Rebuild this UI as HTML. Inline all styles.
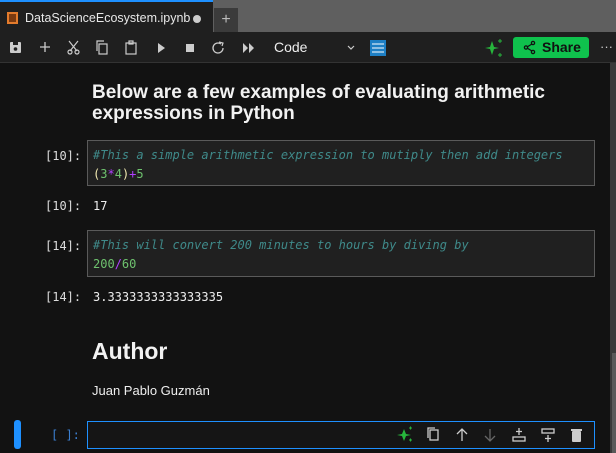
<!DOCTYPE html>
<html><head><style>
*{margin:0;padding:0;box-sizing:border-box}
body{width:616px;height:453px;overflow:hidden;background:#121212;font-family:"Liberation Sans",sans-serif;color:#ddd;position:relative}
.a{position:absolute}
.mono{font-family:"DejaVu Sans Mono","Liberation Mono",monospace;font-size:12px}
.box{position:absolute;left:87px;width:508px;background:#202020;border:1px solid #5a5a5a}
.pr{position:absolute;left:45px;font-family:"DejaVu Sans Mono",monospace;font-size:12px;color:#ddd}
.c{color:#3f8a8a;font-style:italic}
.g{color:#6ec26e}
.p{color:#b040ff}
</style></head><body>
<div class="a" style="left:0;top:0;width:616px;height:32px;background:#5f5f5f"></div>
<div class="a" style="left:0;top:0;width:213px;height:32px;background:#1f1f1f;border-top:2px solid #1e90ff"></div>
<div class="a" style="left:7px;top:12px;width:11px;height:12px;border:2px solid #e37b2c;background:#7a3a10"></div>
<div class="a" style="left:25px;top:11px;font-size:12.5px;color:#e8e8e8">DataScienceEcosystem.ipynb</div>
<div class="a" style="left:193px;top:15px;width:8px;height:8px;border-radius:50%;background:#ccc"></div>
<div class="a" style="left:214px;top:8px;width:24px;height:24px;background:#3b3b3b;color:#bbb;text-align:center;font-size:16px;line-height:23px">+</div>
<div class="a" style="left:0;top:32px;width:616px;height:31px;background:#1f1f1f;border-bottom:1px solid #333"></div>
<svg class="a" style="left:0;top:32px" width="616" height="31">
<g fill="#ccc" stroke="#ccc">
<rect x="10" y="10" width="11" height="11" rx="1" stroke="none"/><rect x="13" y="10" width="5" height="3" fill="#1f1f1f" stroke="none"/><circle cx="15.5" cy="17" r="1.8" fill="#1f1f1f" stroke="none"/>
<path d="M45 10v10M40 15h10" stroke-width="1.3" fill="none"/>
<g fill="none" stroke-width="1.2"><circle cx="70" cy="20" r="2"/><circle cx="77" cy="20" r="2"/><path d="M69 9l8 10M78 9l-8 10"/></g>
<g fill="none" stroke-width="1.2"><rect x="99" y="12" width="8" height="10"/><path d="M97 19V9h7"/></g>
<g fill="none" stroke-width="1.2"><rect x="126" y="11" width="10" height="11"/><rect x="129" y="9" width="4" height="3"/></g>
<path d="M158 11l7 5-7 5z" stroke="none"/>
<rect x="186" y="12" width="8" height="8" stroke="none"/>
<path d="M221 12a5 5 0 1 0 2 4" fill="none" stroke-width="1.3"/><path d="M219 10l4 1-1 3" fill="none" stroke-width="1.2"/>
<path d="M243 11l5 5-5 5zM249 11l5 5-5 5z" stroke="none"/>
<path d="M348 14l3 3 3-3" fill="none" stroke-width="1.2"/>
</g>
<rect x="370" y="8" width="16" height="16" fill="#1e7fc4"/>
<path d="M372 12h12M372 16h12M372 20h12" stroke="#fff" stroke-width="1"/>
<path d="M492 9l2 6 5 1-5 1-2 6-2-6-5-1 5-1z" fill="#27b53c"/><path d="M498 9h4M500 7v4M498 23h4M500 21v4" stroke="#27b53c"/>
<rect x="513" y="5" width="76" height="21" rx="3" fill="#0fc24d"/>
<g fill="none" stroke="#111" stroke-width="1.3"><circle cx="526" cy="15.5" r="1.6"/><circle cx="533" cy="11" r="1.6"/><circle cx="533" cy="20" r="1.6"/><path d="M527 15l5-3M527 16l5 3"/></g>
<text x="542" y="20" font-family="Liberation Sans" font-weight="bold" font-size="14" fill="#111">Share</text>
<text x="600" y="19" font-size="13" fill="#ccc">···</text>
</svg>
<div class="a" style="left:274px;top:39px;font-size:14px;color:#eee">Code</div>
<div class="a" style="left:610px;top:63px;width:6px;height:390px;background:#3a3a3a"></div>
<div class="a" style="left:612px;top:353px;width:4px;height:100px;background:#5a5a5a"></div>
<div class="a" style="left:92px;top:82px;font-size:19px;font-weight:bold;color:#f2f2f2;line-height:21px">Below are a few examples of evaluating arithmetic<br>expressions in Python</div>
<div class="pr" style="top:149px">[10]:</div>
<div class="box mono" style="top:140px;height:46px;padding:5px 5px;line-height:19px"><span class="c">#This a simple arithmetic expression to mutiply then add integers</span><br><span style="color:#f0e8b0">(</span><span class="g">3</span><span class="p">*</span><span class="g">4</span><span style="color:#f0e8b0">)</span><span class="p">+</span><span class="g">5</span></div>
<div class="pr" style="top:199px">[10]:</div>
<div class="a mono" style="left:93px;top:199px;color:#eee">17</div>
<div class="pr" style="top:239px">[14]:</div>
<div class="box mono" style="top:230px;height:47px;padding:5px 5px;line-height:19px"><span class="c">#This will convert 200 minutes to hours by diving by</span><br><span class="g">200</span><span class="p">/</span><span class="g">60</span></div>
<div class="pr" style="top:290px">[14]:</div>
<div class="a mono" style="left:93px;top:290px;color:#eee">3.3333333333333335</div>
<div class="a" style="left:92px;top:338px;font-size:23px;font-weight:bold;color:#f2f2f2">Author</div>
<div class="a" style="left:92px;top:383px;font-size:13px;color:#eee">Juan Pablo Guzmán</div>
<div class="a" style="left:14px;top:420px;width:7px;height:29px;border-radius:3px;background:#1e90ff"></div>
<div class="a" style="left:51px;top:428px;font-family:'DejaVu Sans Mono',monospace;font-size:12px;color:#3b7fd0">[ ]:</div>
<div class="a" style="left:87px;top:421px;width:508px;height:28px;border:1px solid #1e90ff;background:#151515"></div>
<svg class="a" style="left:390px;top:424px" width="200" height="22">
<path d="M14 5l2 5 5 1-5 1-2 5-2-5-5-1 5-1z" fill="#27b53c"/><path d="M19 4h3M20.5 2.5v3M19 16h3M20.5 14.5v3" stroke="#27b53c"/>
<g fill="none" stroke="#ccc" stroke-width="1.3">
<rect x="40" y="6" width="8" height="10"/><path d="M38 14V4h7"/>
<path d="M72 17V5M67 10l5-5 5 5"/>
<path d="M100 5v12M95 12l5 5 5-5" stroke="#666"/>
<rect x="123" y="13" width="12" height="4"/><path d="M129 4v7M126 7.5h6"/>
<rect x="152" y="5" width="12" height="4"/><path d="M158 11v7M155 14.5h6"/>
</g>
<rect x="182" y="7" width="9" height="11" rx="1" fill="#ccc"/><rect x="181" y="5" width="11" height="2" fill="#ccc"/>
</svg>
</body></html>
